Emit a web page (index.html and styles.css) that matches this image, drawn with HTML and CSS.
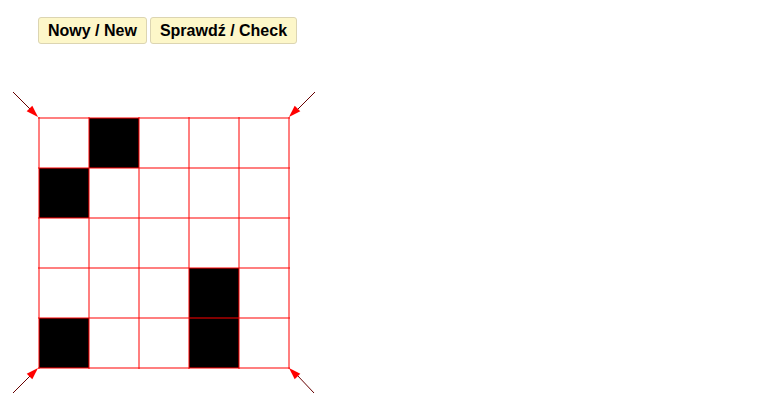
FILE: index.html
```html
<!DOCTYPE html>
<html>
<head>
<meta charset="utf-8">
<link rel="stylesheet" href="styles.css">
</head>
<body>
<div class="toolbar">
  <button class="btn">Nowy / New</button>
  <button class="btn">Sprawdź / Check</button>
</div>
<svg class="board" width="330" height="320" viewBox="0 80 330 320" xmlns="http://www.w3.org/2000/svg">
  <g fill="#000">
    <rect x="89" y="118" width="50" height="50"/>
    <rect x="39" y="168" width="50" height="50"/>
    <rect x="189" y="268" width="50" height="50"/>
    <rect x="39" y="318" width="50" height="50"/>
    <rect x="189" y="318" width="50" height="50"/>
  </g>
  <g stroke="rgba(255,0,0,0.5)" stroke-width="2" fill="none">
    <line x1="39" y1="117" x2="39" y2="369"/>
    <line x1="89" y1="117" x2="89" y2="369"/>
    <line x1="139" y1="117" x2="139" y2="369"/>
    <line x1="189" y1="117" x2="189" y2="369"/>
    <line x1="239" y1="117" x2="239" y2="369"/>
    <line x1="289" y1="117" x2="289" y2="369"/>
    <line x1="38" y1="118" x2="290" y2="118"/>
    <line x1="38" y1="168" x2="290" y2="168"/>
    <line x1="38" y1="218" x2="290" y2="218"/>
    <line x1="38" y1="268" x2="290" y2="268"/>
    <line x1="38" y1="318" x2="290" y2="318"/>
    <line x1="38" y1="368" x2="290" y2="368"/>
  </g>
  <g stroke="#600" stroke-width="1">
    <line x1="13" y1="92" x2="31" y2="110"/>
    <line x1="315" y1="92" x2="297" y2="110"/>
    <line x1="13" y1="393" x2="31" y2="375"/>
    <line x1="314" y1="393" x2="297" y2="375"/>
  </g>
  <g fill="#f00">
    <polygon points="38,117 26.7,111.3 32.3,105.7"/>
    <polygon points="289,117 300.3,111.3 294.7,105.7"/>
    <polygon points="38,368 32.3,379.3 26.7,373.7"/>
    <polygon points="289,368 294.7,379.3 300.3,373.7"/>
  </g>
</svg>
</body>
</html>
```

FILE: styles.css
```css
html, body {
  margin: 0;
  padding: 0;
  background: #fff;
}
body {
  font-family: "Liberation Sans", Arial, sans-serif;
}
.toolbar {
  display: flex;
  gap: 3px;
  padding: 17px 0 0 38px;
  height: 27px;
}
.btn {
  height: 27px;
  margin: 0;
  padding: 0 9px;
  font-family: "Liberation Sans", Arial, sans-serif;
  font-weight: bold;
  font-size: 16px;
  color: #000;
  background: #fdf7c9;
  border: 1px solid #dcd5b2;
  border-radius: 3px;
  line-height: 25px;
}
.board {
  display: block;
  margin-top: 36px;
}
```
